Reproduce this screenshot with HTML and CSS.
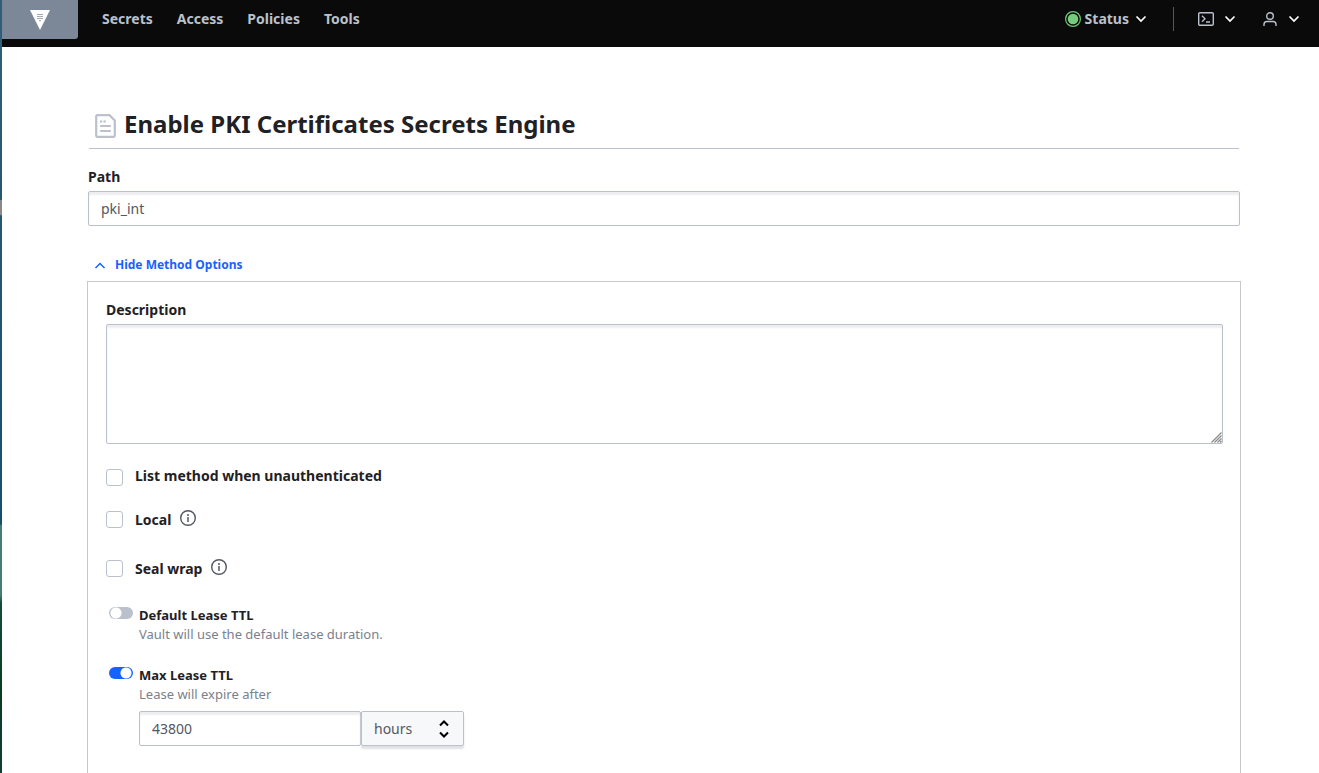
FILE: index.html
```html
<!DOCTYPE html>
<html lang="en">
<head>
<meta charset="utf-8">
<meta name="viewport" content="width=device-width, initial-scale=1">
<title>Vault</title>
<link rel="stylesheet" href="styles.css">
</head>
<body class="app">
<div class="desktop-edge"></div>
<div class="page">
  <header class="navbar">
    <a class="brand" href="#" aria-label="Vault home">
      <svg width="20" height="20" viewBox="0 0 20 20"><path d="M0 0h20L10 20z" fill="#fff"/><path d="M7 4.500h6M7 6.500h6M7 8.500h6M9 10.500h2" stroke="#a3abb7" stroke-width="1"/></svg>
    </a>
    <nav class="links">
      <a href="#">Secrets</a>
      <a href="#">Access</a>
      <a href="#">Policies</a>
      <a href="#">Tools</a>
    </nav>
    <div class="actions">
      <button class="nav-button status" type="button">
        <svg width="16" height="16" viewBox="0 0 16 16"><circle cx="8" cy="8" r="7.400" fill="none" stroke="#6ccc74" stroke-width="1.200"/><circle cx="8" cy="8" r="5.300" fill="#75cc7c"/></svg>
        <span>Status</span>
        <svg class="caret" width="12" height="8" viewBox="0 0 12 8"><path d="M1.500 1.500L6 6l4.500-4.500" fill="none" stroke="#fff" stroke-width="1.700"/></svg>
      </button>
      <span class="divider"></span>
      <button class="nav-button console" type="button" aria-label="Console">
        <svg width="16" height="14" viewBox="0 0 16 14"><rect x=".7" y=".7" width="14.600" height="12.600" rx="1.300" fill="none" stroke="#bac1cc" stroke-width="1.400"/><path d="M4 3.800L7 6.800 4 9.800M8 10h4" fill="none" stroke="#bac1cc" stroke-width="1.300"/></svg>
        <svg class="caret" width="12" height="8" viewBox="0 0 12 8"><path d="M1.500 1.500L6 6l4.500-4.500" fill="none" stroke="#fff" stroke-width="1.700"/></svg>
      </button>
      <button class="nav-button user" type="button" aria-label="User menu">
        <svg width="14" height="14" viewBox="0 0 14 14"><circle cx="7" cy="4" r="3.300" fill="none" stroke="#bac1cc" stroke-width="1.400"/><path d="M1 14v-1.500Q1 9.500 4 9.500h6q3 0 3 3V14" fill="none" stroke="#bac1cc" stroke-width="1.400"/></svg>
        <svg class="caret" width="12" height="8" viewBox="0 0 12 8"><path d="M1.500 1.500L6 6l4.500-4.500" fill="none" stroke="#fff" stroke-width="1.700"/></svg>
      </button>
    </div>
  </header>

  <main class="content">
    <h1 class="title">
      <svg width="21" height="24" viewBox="0 0 21 24"><path d="M1.200 2.500Q1.200 1.200 2.500 1.200H14.500l5.300 5.300v15q0 1.300-1.300 1.300h-16q-1.300 0-1.300-1.300z" fill="none" stroke="#bac1cc" stroke-width="2.200"/><path d="M6 12h9M6 17h9" stroke="#bac1cc" stroke-width="2.200" stroke-linecap="round"/><path d="M5 7.500h2.300M8.500 7.500h2.300" stroke="#bac1cc" stroke-width="2"/></svg>
      <span>Enable PKI Certificates Secrets Engine</span>
    </h1>

    <form class="form">
      <label class="label" for="path">Path</label>
      <input class="input" id="path" type="text" value="pki_int">

      <button class="toggle-options" type="button">
        <svg width="12" height="8" viewBox="0 0 12 8"><path d="M1.500 7L6 2.500 10.500 7" fill="none" stroke="#1563ff" stroke-width="1.500"/></svg>
        <span>Hide Method Options</span>
      </button>

      <div class="panel">
        <label class="label" for="description">Description</label>
        <div class="textarea-wrap">
          <textarea class="input textarea" id="description"></textarea>
          <svg class="grip" width="11" height="11" viewBox="0 0 11 11"><path d="M.5 10.500l10-10M3.500 10.500l7-7M6.500 10.500l4-4M9 10.500l1.500-1.500" stroke="#888" stroke-width="1.200"/></svg>
        </div>

        <div class="check">
          <input type="checkbox" id="list-method">
          <label for="list-method">List method when unauthenticated</label>
        </div>
        <div class="check check-info">
          <input type="checkbox" id="local">
          <label for="local">Local</label>
          <svg class="info" width="16" height="16" viewBox="0 0 16 16"><circle cx="8" cy="8" r="7.300" fill="none" stroke="#525761" stroke-width="1.400"/><path d="M8 4v2M8 7v5" stroke="#6f7682" stroke-width="1.800"/></svg>
        </div>
        <div class="check check-info">
          <input type="checkbox" id="seal-wrap">
          <label for="seal-wrap">Seal wrap</label>
          <svg class="info" width="16" height="16" viewBox="0 0 16 16"><circle cx="8" cy="8" r="7.300" fill="none" stroke="#525761" stroke-width="1.400"/><path d="M8 4v2M8 7v5" stroke="#6f7682" stroke-width="1.800"/></svg>
        </div>

        <div class="ttl">
          <input class="switch" type="checkbox" id="default-ttl">
          <div class="ttl-body">
            <label for="default-ttl">Default Lease TTL</label>
            <p>Vault will use the default lease duration.</p>
          </div>
        </div>
        <div class="ttl">
          <input class="switch" type="checkbox" id="max-ttl" checked>
          <div class="ttl-body">
            <label for="max-ttl">Max Lease TTL</label>
            <p>Lease will expire after</p>
            <div class="duration">
              <input class="input amount" type="text" value="43800" aria-label="Max lease duration">
              <div class="unit">
                <select aria-label="Unit"><option>hours</option><option>minutes</option><option>seconds</option><option>days</option></select>
                <svg class="unit-arrows" width="10" height="18" viewBox="0 0 10 18"><path d="M1 5.500l4-4 4 4M1 12.500l4 4 4-4" fill="none" stroke="#000" stroke-width="2"/></svg>
              </div>
            </div>
          </div>
        </div>
      </div>
    </form>
  </main>
</div>
</body>
</html>
```
FILE: styles.css
```css
* { box-sizing: border-box; }

.app {
  display: flex;
  min-height: 100vh;
  margin: 0;
  background: #fff;
  color: #1f2124;
  font: 14px/20px "Noto Sans", "Open Sans", sans-serif;
}

.app svg { display: block; flex: none; }

.desktop-edge {
  flex: none;
  width: 2px;
  background: linear-gradient(#2f5f78 0 4%, #2b5470 25.800%, #8b8888 25.900% 27.800%, #285670 27.900%, #174f6b 67.800%, #487a78 68% 77%, #154b35 78%, #0b3a24 90%, #123f2e);
}

.page { display: flex; flex: 1; flex-direction: column; min-width: 0; }

/* Top navigation */
.navbar { display: flex; align-items: flex-start; height: 47px; background: #0a0a0a; }

.brand {
  display: flex;
  align-items: center;
  justify-content: center;
  width: 76px;
  height: 39px;
  border-radius: 0 0 3px 0;
  background: #7c8797;
}

.links { display: flex; gap: 24px; padding: 9px 24px; }
.links a { color: #bac1cc; font-weight: 700; text-decoration: none; }

.actions { display: flex; align-items: center; height: 38px; margin-left: auto; padding-right: 19px; }

.nav-button {
  display: flex;
  align-items: center;
  padding: 0;
  border: 0;
  background: none;
  color: #bac1cc;
  font: inherit;
  font-weight: 700;
  cursor: pointer;
}

.status { gap: 4px; }
.status .caret { margin-left: 2px; }
.divider { width: 1px; height: 24px; margin: 0 24px 0 26px; background: #525761; }
.console { gap: 10px; margin-right: 27px; }
.user { gap: 11px; }

/* Form page */
.content { display: flex; flex: 1; flex-direction: column; padding: 61px 79px 0 86px; }

.title {
  display: flex;
  align-items: center;
  gap: 8px;
  margin: 0 1px 18px;
  padding: 0 6px 8px;
  border-bottom: 1px solid #bac1cc;
  font-size: 24px;
  font-weight: 700;
  line-height: 32px;
}
.title svg { margin-top: 3px; }

.form { display: flex; flex: 1; flex-direction: column; }

.label { display: block; margin-bottom: 4px; font-weight: 700; }

.input {
  display: block;
  width: 100%;
  height: 35px;
  padding: 0 12px;
  border: 1px solid #bac1cc;
  border-radius: 2px;
  outline: 0;
  background: #fff;
  box-shadow: inset 0 3px 2px #eeeef0;
  color: #525761;
  font: inherit;
}

.toggle-options {
  display: flex;
  align-items: center;
  align-self: flex-start;
  gap: 9px;
  margin: 29px 0 6px;
  padding: 0 6px;
  border: 0;
  background: none;
  color: #1563ff;
  font: inherit;
  font-size: 12px;
  font-weight: 700;
  cursor: pointer;
}

.panel {
  flex: 1;
  margin: 0 -1px;
  padding: 18px 17px 24px 18px;
  border: 1px solid #c8c9cb;
  border-bottom: 0;
}

.textarea-wrap { position: relative; }
.textarea { height: 120px; padding: 8px 12px; resize: none; }
.grip { position: absolute; right: 1px; bottom: 1px; }

.check { display: flex; align-items: center; height: 20px; margin-top: 23px; }
.check + .check-info { margin-top: 22px; }
.check-info + .check-info { margin-top: 29px; }
.check label { margin-left: 12px; padding-bottom: 2px; font-weight: 700; }
.check-info label { padding: 2px 0 0; }
.check .info { margin: 0 0 2px 9px; }

.check input {
  flex: none;
  width: 17px;
  height: 17px;
  margin: 0;
  border: 1px solid #bac1cc;
  border-radius: 3px;
  appearance: none;
  background: #fff;
}

.ttl { display: flex; gap: 6px; margin-top: 27px; padding-left: 3px; font-size: 13px; }
.ttl + .ttl { margin-top: 21px; }
.ttl label { display: block; font-weight: 700; }
.ttl p { margin: 0; color: #7a818d; line-height: 19px; }

.switch {
  flex: none;
  width: 24px;
  height: 12px;
  margin: 2px 0 0;
  border-radius: 6px;
  appearance: none;
  background: radial-gradient(circle at 7px 6px, #fff 5px, transparent 6px) #bac1cc;
}
.switch:checked { background: radial-gradient(circle at 17px 6px, #fff 5px, transparent 6px) #1563ff; }

.duration { display: flex; margin-top: 7px; font-size: 14px; }
.amount { width: 222px; }
.unit { position: relative; }
.unit select {
  width: 103px;
  height: 35px;
  padding: 0 12px;
  border: 1px solid #bac1cc;
  border-radius: 2px;
  appearance: none;
  background: #f7f8fa;
  box-shadow: 0 3px 2px #e0e1e4;
  color: #525761;
  font: inherit;
}
.unit-arrows { position: absolute; top: 9px; right: 15px; pointer-events: none; }
```
